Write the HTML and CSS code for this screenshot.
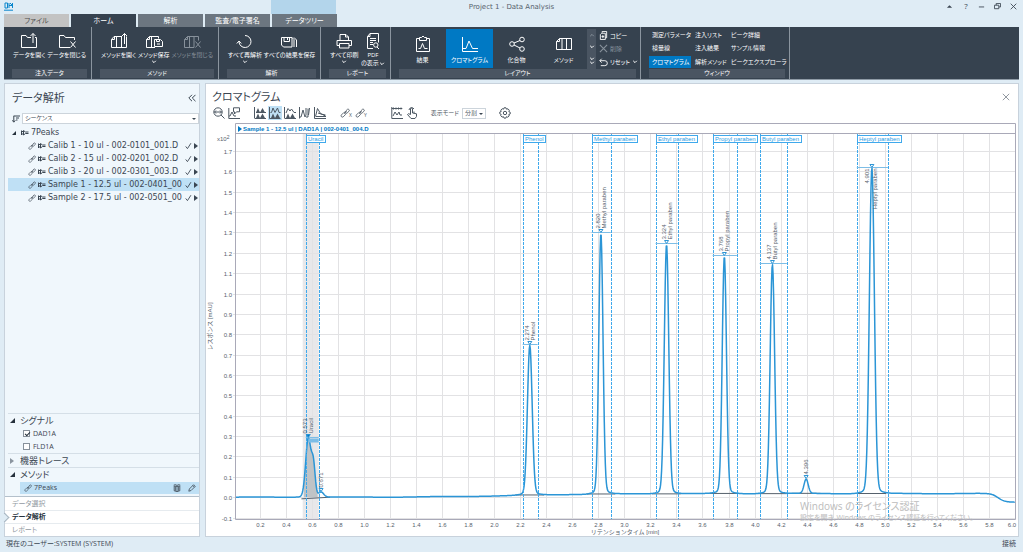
FILE: index.html
```html
<!DOCTYPE html>
<html lang="ja">
<head>
    <meta charset="UTF-8">
    <meta name="viewport" content="width=device-width, initial-scale=1.0">
    <title>Project 1 - Data Analysis</title>
    <link rel="stylesheet" href="styles.css">
</head>
<body>
    <svg class="sprite" aria-hidden="true">
        <symbol id="i-link" viewBox="0 0 12 12"><path d="M5 7l3-3M6 5L4.500 5.500 1.500 8.500a1.600 1.600 0 0 0 2.200 2.200L6.500 8 7 6.500M6 5L7 3.500 9 1.500a1.600 1.600 0 0 1 2 2.200L8.500 6 7 6.500"/></symbol>
        <symbol id="i-pin" viewBox="0 0 8 8"><path d="M.5 1.500v4.500M.5 2.500h2M.5 5h2M2.500 1.500v4.500L4.500 4.500h3M2.500 1.500L4.500 3h3"/></symbol>
        <symbol id="i-check" viewBox="0 0 8 8"><path d="M.8 4.500l2 2.500L6.800.8"/></symbol>
        <symbol id="i-play" viewBox="0 0 4 6"><path d="M0 0l4 3-4 3z"/></symbol>
        <symbol id="i-down" viewBox="0 0 6 4"><path d="M1.200.8L3 2.600 4.800.8"/></symbol>
        <symbol id="i-x" viewBox="0 0 8 8"><path d="M.8.8l6.400 6.400M7.200.8L.8 7.200"/></symbol>
        <symbol id="i-folder-open" viewBox="0 0 18 18"><path d="M11 5.500H7.500L6 3.500H1.500v12h15v-10H15M13 11V1.500M10.500 4L13 1.500 15.500 4"/></symbol>
        <symbol id="i-folder-close" viewBox="0 0 18 18"><path d="M12 15.500H1.500v-12H6l1.500 2h9V8M12.500 9.500l5 6M17.500 9.500l-5 6"/></symbol>
        <symbol id="i-method-open" viewBox="0 0 18 18"><path d="M12 4.500H4l-2.500 3v8h15v-11M4.500 4.500v3h-3M6.500 4.500v11M11.500 4.500v11M14.500 12V1.500M12 4l2.500-2.500L17 4"/></symbol>
        <symbol id="i-method-save" viewBox="0 0 18 18"><path d="M10 15.500H1.500v-8l3-3h9v2M4.500 4.500v3h-3M6.500 4.500v11M9.500 7.500h6l2 2v5h-8zM11.500 7.500v2h3v-2M12 12h3"/></symbol>
        <symbol id="i-method-close" viewBox="0 0 18 18"><path d="M11 15.500H1.500v-8l3-3h11v4M4.500 4.500v3h-3M6.500 4.500v11M11 4.500v11M12.500 9.500l5 6M17.500 9.500l-5 6"/></symbol>
        <symbol id="i-rerun" viewBox="0 0 18 18"><path d="M9 3.500a6 6 0 1 1-6 6.500M.8 11.500L3 9l2.300 2.500"/></symbol>
        <symbol id="i-save-all" viewBox="0 0 18 18"><path d="M1.500 5.500h10.500v9.500H3.500l-2-2zM4 5.500v4h5.500v-4M7.500 6v2M12 5.500l2 2V15M14 5.500l2.500 2.500v7"/></symbol>
        <symbol id="i-print" viewBox="0 0 18 18"><path d="M5 8V2.500h6L13.500 5v3M4 13.500H2V8.500h14.500v5H14M4.500 11.500h9.500v4.500H4.500zM10.500 2.500V5h3"/></symbol>
        <symbol id="i-pdf" viewBox="0 0 18 18"><path d="M9 16.500H3.500v-12l2.500-3h8.500v9M6 1.500v3H3.500M6 6.500h6M6 8.500h6M6 10.500h3M6 12.500h3M15 17l-2-2"/><circle cx="11.800" cy="13" r="2.200"/></symbol>
        <symbol id="i-result" viewBox="0 0 18 18"><path d="M5.500 3.500h-3v13h13v-13h-3M5.500 2.500h2L9 1l1.500 1.500h2v3h-7zM4.500 13.500h2l2-5 2 5h3"/></symbol>
        <symbol id="i-chrom" viewBox="0 0 18 18"><path d="M1.500 2v14.500H17M2 13.500h3L8 6l3.500 7.500H17"/></symbol>
        <symbol id="i-share" viewBox="0 0 18 18"><circle cx="4" cy="9" r="2.300"/><circle cx="14" cy="4.500" r="2.300"/><circle cx="14" cy="14" r="2.300"/><path d="M6 8l6-2.500M6 10l6 3"/></symbol>
        <symbol id="i-method" viewBox="0 0 18 18"><path d="M1.500 6.500l3-3h12v11h-15zM4.500 3.500v3h-3M7 3.500v11M11.500 3.500v11"/></symbol>
        <symbol id="i-copy" viewBox="0 0 10 10"><path d="M3.500 2V.5h5v7H7M1.500 4L3 2.500h4v7H1.500zM4.300 4.500v3.500M2.800 6.200h3"/></symbol>
        <symbol id="i-undo" viewBox="0 0 10 10"><path d="M3 .8L.8 3 3 5.200M1 3h5.500a2.500 2.500 0 0 1 0 5.500H2"/></symbol>
        <symbol id="i-zoom" viewBox="0 0 12 12"><circle cx="5" cy="5" r="4.200"/><path d="M8 8l3.500 3.500M1.500 5h7M3 3.500L1.500 5 3 6.500M7 3.500L8.500 5 7 6.500"/></symbol>
        <symbol id="i-annot" viewBox="0 0 12 12"><path d="M.8 1v10.500H12M1 9h1l2-4 2 4h2M5.500.8h6v4h-3L6.500 7V4.800h-1z"/></symbol>
        <symbol id="i-peaks" viewBox="0 0 12 12"><path d="M.5 0v11.500M2 5.500h10M1 11.500h11"/><path class="solid" d="M2 5.500L4 1l2 4.500L8.500 1l2.500 4.500zM2 11L4 6.500l2 4.500 2.500-4.500L11 11z"/></symbol>
        <symbol id="i-peaks-on" viewBox="0 0 12 12"><path d="M.5 0v11.500M1.500 5.500h1L4 1l2 4.500L8.500 1l1.500 4.500h1.500M.5 11.500h11"/><path class="solid" d="M2 11l2-4.500L6 11l2.500-4.500L11 11z"/></symbol>
        <symbol id="i-peaks-off" viewBox="0 0 12 12"><path d="M.5 0v11.500M2 6L4 1.500l2 2.500 1.500-2L10 5.500h2M1 11.500h11"/><path class="solid" d="M2 11l2-4.500L6 11l2.500-4.500L11 11z"/></symbol>
        <symbol id="i-split" viewBox="0 0 12 12"><path d="M.5 0v11.500M1 10h1l2-7 2 7 1-2V1M7 10h2V1.500M9.500 8l1-7"/></symbol>
        <symbol id="i-overlay" viewBox="0 0 12 12"><path d="M.5 0v11.500H12M1.500 9.500l2-8 3 5 5 2.500M2 9.500h10M4 6l3 1 4.500 1"/></symbol>
        <symbol id="i-scale" viewBox="0 0 12 12"><path d="M.8 0v11.500H12M.8 1.500h10.500M2.500.5v2M5 .5v2M7.500.5v2M10 .5v2M2 9l2-4 2 3 2-3 1 3h2"/></symbol>
        <symbol id="i-hand" viewBox="0 0 12 12"><path d="M4.500 7.500V2a1 1 0 0 1 2 0v4l4 .8v2.700L9 11.500H5L1.500 7.500l1-.8zM8 6V4.500M3 3a2.700 2.700 0 0 1 5-1"/></symbol>
        <symbol id="i-gear" viewBox="0 0 12 12"><circle cx="6" cy="6" r="1.700"/><path d="M5 .8h2l.5 1.400 1.500-.4 1.300 1.500-.5 1.300 1.400.6v1.800l-1.400.5.4 1.500-1.500 1.200-1.300-.5-.5 1.400H5l-.5-1.400-1.500.4L1.700 8.600l.5-1.200L.8 6.800V5l1.400-.5-.4-1.300L3.200 1.700l1.300.5z"/></symbol>
        <symbol id="i-book" viewBox="0 0 10 10"><path d="M5 2.500v7L1.500 8.500v-6L5 3l3.500-.5v6L5 9.500M.8 1.500L3 .8l2 1 2-1 2.200.7M3 3v5.500M7 3v5.500"/></symbol>
        <symbol id="i-pen" viewBox="0 0 10 10"><path d="M1 9l.7-2.800L7 .9 9 3 3.800 8.200zM6 2l2 2"/></symbol>
        <symbol id="i-sort" viewBox="0 0 8 8"><path d="M1.800.8v6M.3 5.300l1.500 1.900 1.500-1.900M1.800 1H8M4 3h3M4 5h1.500"/></symbol>
        <symbol id="i-logo" viewBox="0 0 10 10"><path d="M1 1v5h2.500V1zM5 1v5M5 3.500h3M8.500 1v5M6 1l2 2M0 8.200h9"/></symbol>
    </svg>

    <header class="titlebar">
        <svg class="logo"><use href="#i-logo"/></svg>
        <div class="context-tab"></div>
        <h1>Project 1 - Data Analysis</h1>
        <div class="window-buttons">
            <button aria-label="リボンを折りたたむ"><svg viewBox="0 0 8 8"><path class="solid" d="M1 5.500L4 2.500l3 3z"/></svg></button>
            <button aria-label="ヘルプ">?</button>
            <button aria-label="最小化"><svg viewBox="0 0 8 8"><path d="M1 4.500h6"/></svg></button>
            <button aria-label="元に戻す"><svg viewBox="0 0 8 8"><path d="M2.500 2.500v-2h5v4h-2M.5 2.500h5v4h-5z"/></svg></button>
            <button aria-label="閉じる"><svg viewBox="0 0 8 8"><use href="#i-x"/></svg></button>
        </div>
    </header>

    <nav class="tabs">
        <button class="tab file">ファイル</button>
        <button class="tab active">ホーム</button>
        <button class="tab">解析</button>
        <button class="tab">監査/電子署名</button>
        <button class="tab">データツリー</button>
    </nav>

    <div class="ribbon">
        <section class="group group-data">
            <div class="tools">
                <button class="tool"><svg><use href="#i-folder-open"/></svg>データを開く</button>
                <button class="tool"><svg><use href="#i-folder-close"/></svg>データを閉じる</button>
            </div>
            <h2>注入データ</h2>
        </section>
        <section class="group group-method">
            <div class="tools">
                <button class="tool"><svg><use href="#i-method-open"/></svg>メソッドを開く</button>
                <button class="tool"><svg><use href="#i-method-save"/></svg>メソッド保存<svg class="down"><use href="#i-down"/></svg></button>
                <button class="tool" disabled><svg><use href="#i-method-close"/></svg>メソッドを閉じる</button>
            </div>
            <h2>メソッド</h2>
        </section>
        <section class="group group-analysis">
            <div class="tools">
                <button class="tool"><svg><use href="#i-rerun"/></svg>すべて再解析<svg class="down"><use href="#i-down"/></svg></button>
                <button class="tool"><svg><use href="#i-save-all"/></svg>すべての結果を保存</button>
            </div>
            <h2>解析</h2>
        </section>
        <section class="group group-report">
            <div class="tools">
                <button class="tool"><svg><use href="#i-print"/></svg>すべて印刷<svg class="down"><use href="#i-down"/></svg></button>
                <button class="tool"><svg><use href="#i-pdf"/></svg>PDF<span>の表示<svg class="down"><use href="#i-down"/></svg></span></button>
            </div>
            <h2>レポート</h2>
        </section>
        <section class="group group-layout">
            <div class="tools">
                <button class="tool large"><svg><use href="#i-result"/></svg>結果</button>
                <button class="tool large selected"><svg><use href="#i-chrom"/></svg>クロマトグラム</button>
                <button class="tool large"><svg><use href="#i-share"/></svg>化合物</button>
                <button class="tool large"><svg><use href="#i-method"/></svg>メソッド</button>
                <div class="scroller">
                    <button aria-label="上へ" disabled><svg class="down up"><use href="#i-down"/></svg></button>
                    <button aria-label="下へ"><svg class="down"><use href="#i-down"/></svg></button>
                    <button aria-label="その他"><svg class="down"><use href="#i-down"/></svg><svg class="down"><use href="#i-down"/></svg></button>
                </div>
                <div class="small-list">
                    <button><svg><use href="#i-copy"/></svg>コピー</button>
                    <button disabled><svg><use href="#i-x"/></svg>削除</button>
                    <button><svg><use href="#i-undo"/></svg>リセット<svg class="down"><use href="#i-down"/></svg></button>
                </div>
            </div>
            <h2>レイアウト</h2>
        </section>
        <section class="group group-window">
            <div class="window-list">
                <button>測定パラメータ</button>
                <button>注入リスト</button>
                <button>ピーク詳細</button>
                <button>検量線</button>
                <button>注入結果</button>
                <button>サンプル情報</button>
                <button class="selected">クロマトグラム</button>
                <button>解析メソッド</button>
                <button>ピークエクスプローラ</button>
            </div>
            <h2>ウィンドウ</h2>
        </section>
    </div>

    <main class="workspace">
        <aside class="sidebar">
            <div class="panel-head">
                <h2>データ解析</h2>
                <button class="collapse" aria-label="折りたたむ"><svg viewBox="0 0 8 8"><path d="M4 .8L.8 4 4 7.200M7.500.8L4.300 4l3.200 3.200"/></svg></button>
            </div>
            <div class="sort">
                <svg><use href="#i-sort"/></svg>
                <span class="select">
                    <select aria-label="並べ替え"><option>シーケンス</option></select>
                </span>
            </div>
            <ul class="tree">
                <li class="root"><i class="expanded"></i><svg><use href="#i-pin"/></svg><span>7Peaks</span></li>
                <li><svg><use href="#i-link"/></svg><svg><use href="#i-pin"/></svg><span>Calib 1 - 10 ul - 002-0101_001.D</span><svg class="check"><use href="#i-check"/></svg><svg class="play"><use href="#i-play"/></svg></li>
                <li><svg><use href="#i-link"/></svg><svg><use href="#i-pin"/></svg><span>Calib 2 - 15 ul - 002-0201_002.D</span><svg class="check"><use href="#i-check"/></svg><svg class="play"><use href="#i-play"/></svg></li>
                <li><svg><use href="#i-link"/></svg><svg><use href="#i-pin"/></svg><span>Calib 3 - 20 ul - 002-0301_003.D</span><svg class="check"><use href="#i-check"/></svg><svg class="play"><use href="#i-play"/></svg></li>
                <li class="selected"><svg><use href="#i-link"/></svg><svg><use href="#i-pin"/></svg><span>Sample 1 - 12.5 ul - 002-0401_00</span><svg class="check"><use href="#i-check"/></svg><svg class="play"><use href="#i-play"/></svg></li>
                <li><svg><use href="#i-link"/></svg><svg><use href="#i-pin"/></svg><span>Sample 2 - 17.5 ul - 002-0501_00</span><svg class="check"><use href="#i-check"/></svg><svg class="play"><use href="#i-play"/></svg></li>
            </ul>
            <section class="fold">
                <h3><i class="expanded"></i>シグナル</h3>
                <label><input type="checkbox" checked>DAD1A</label>
                <label><input type="checkbox">FLD1A</label>
            </section>
            <section class="fold">
                <h3><i class="closed"></i>機器トレース</h3>
            </section>
            <section class="fold">
                <h3><i class="expanded"></i>メソッド</h3>
                <div class="method-row">
                    <svg><use href="#i-link"/></svg><span>7Peaks</span>
                    <button aria-label="メソッドを表示"><svg><use href="#i-book"/></svg></button>
                    <button aria-label="編集"><svg><use href="#i-pen"/></svg></button>
                </div>
            </section>
            <nav class="views">
                <a href="#select">データ選択</a>
                <a href="#analysis" class="active">データ解析</a>
                <a href="#report">レポート</a>
            </nav>
        </aside>

        <section class="chart-panel">
            <div class="panel-head">
                <h2>クロマトグラム</h2>
                <button class="close" aria-label="閉じる"><svg><use href="#i-x"/></svg></button>
            </div>
            <div class="toolbar">
                <div class="set">
                    <button aria-label="ズーム"><svg><use href="#i-zoom"/></svg></button>
                    <button aria-label="注釈"><svg><use href="#i-annot"/></svg></button>
                </div>
                <div class="set">
                    <button aria-label="ピーク表示"><svg><use href="#i-peaks"/></svg></button>
                    <button aria-label="ピーク塗りつぶし" class="on"><svg><use href="#i-peaks-on"/></svg></button>
                    <button aria-label="ピーク枠"><svg><use href="#i-peaks-off"/></svg></button>
                    <button aria-label="並べて表示"><svg><use href="#i-split"/></svg></button>
                    <button aria-label="重ね書き"><svg><use href="#i-overlay"/></svg></button>
                </div>
                <div class="set links">
                    <button aria-label="X軸リンク"><svg><use href="#i-link"/></svg><sub>X</sub></button>
                    <button aria-label="Y軸リンク"><svg><use href="#i-link"/></svg><sub>Y</sub></button>
                </div>
                <div class="set">
                    <button aria-label="スケール"><svg><use href="#i-scale"/></svg></button>
                    <button aria-label="手動積分"><svg><use href="#i-hand"/></svg></button>
                </div>
                <div class="set mode">
                    <label for="mode">表示モード</label>
                    <span class="select"><select id="mode"><option>分割</option></select></span>
                </div>
                <div class="set">
                    <button aria-label="設定"><svg><use href="#i-gear"/></svg></button>
                </div>
            </div>
            <div class="chart" id="chart"></div>
            <div class="watermark">
                <p>Windows のライセンス認証</p>
                <p class="small">設定を開き、Windows のライセンス認証を行ってください。</p>
            </div>
        </section>
    </main>

    <footer class="statusbar">
        <span>現在のユーザー:SYSTEM (SYSTEM)</span>
        <span>接続</span>
    </footer>

    <script src="chart.js"></script>
</body>
</html>
```
FILE: styles.css
```css
:root {
    --bg: #dfecf5;
    --ribbon: #36424f;
    --strip: #4a5562;
    --accent: #0079c4;
    --line: #c8d2dc;
    --select: #bfe0f5;
    --text: #3b4652;
}
* {
    box-sizing: border-box;
}
body {
    margin: 0;
    min-height: 100vh;
    display: flex;
    flex-direction: column;
    background-color: var(--bg);
    color: var(--text);
    font-family: "Open Sans", "Noto Sans CJK JP", sans-serif;
    font-size: 7px;
    line-height: 10px;
    font-feature-settings: "palt";
}
h1, h2, h3, p, ul {
    margin: 0;
    padding: 0;
    font-weight: normal;
}
ul {
    list-style: none;
}
button {
    border: 0;
    padding: 0;
    margin: 0;
    background: none;
    color: inherit;
    font: inherit;
    font-feature-settings: inherit;
    white-space: nowrap;
}
svg {
    fill: none;
    stroke: currentColor;
    stroke-width: 1;
    display: block;
    flex: none;
}
.solid {
    fill: currentColor;
    stroke: none;
}
.sprite {
    position: absolute;
    width: 0;
    height: 0;
}

/* title bar */
.titlebar {
    position: relative;
    height: 14px;
    padding: 0 4px;
    display: flex;
    align-items: center;
    justify-content: space-between;
}
.titlebar h1 {
    font: 7px/16px "DejaVu Sans", sans-serif;
    color: #56616c;
}
.logo {
    width: 10px;
    height: 10px;
    color: #0a86cc;
}
.context-tab {
    position: absolute;
    left: 271px;
    top: 0;
    width: 65px;
    height: 14px;
    background-color: #b3d5eb;
}
.window-buttons {
    display: flex;
    gap: 8px;
    position: absolute;
    right: 5px;
    top: 1px;
}
.window-buttons button {
    width: 8px;
    font-size: 8px;
}
.window-buttons svg {
    width: 7px;
    height: 7px;
}
.titlebar::after {
    content: "";
    width: 10px;
}

/* tabs */
.tabs {
    display: flex;
    gap: 2px;
    padding: 0 4px;
}
.tab {
    width: 65px;
    height: 13px;
    background-color: #6c7680;
    color: #fff;
}
.tab.active {
    background-color: var(--ribbon);
}
.tab.file {
    background-color: #c3c3c3;
    color: #4c4c4c;
}

/* ribbon */
.ribbon {
    display: flex;
    margin: 0 4px;
    background-color: var(--ribbon);
    border-bottom: 1px solid #8f9ba6;
    color: #fff;
    font-size: 6px;
    line-height: 8px;
}
.group {
    display: flex;
    flex-direction: column;
    padding: 2px 4px 1px 8px;
    border-right: 1px solid #8b959f;
}
.group h2 {
    height: 9px;
    font-size: 6px;
    line-height: 9px;
    text-align: center;
    background-color: var(--strip);
}
.tools {
    display: flex;
    height: 40px;
}
.tool {
    display: flex;
    flex-direction: column;
    align-items: center;
    flex: auto;
    padding-top: 3px;
    height: 39px;
}
.tool svg {
    width: 18px;
    height: 18px;
    margin-bottom: 1px;
}
.tool span {
    display: flex;
    align-items: center;
}
.down,
.tool .down {
    width: 6px;
    height: 4px;
    margin: 0;
}
.down.up {
    transform: rotate(180deg);
}
.tool .down {
    margin-top: 1px;
}
.tool:disabled,
.small-list button:disabled,
.scroller button:disabled {
    color: #87919b;
}
.tool.large {
    flex: none;
    width: 47px;
    padding-top: 6px;
}
.tool.large svg {
    margin-bottom: 3px;
}
.selected {
    background-color: var(--accent);
}
.group-data { width: 88px; }
.group-method { width: 127px; }
.group-analysis { width: 102px; }
.group-report { width: 70px; }
.group-layout { width: 250px; }
.group-window { width: 149px; }
.scroller {
    flex: none;
    width: 9px;
    background-color: var(--strip);
    display: flex;
    flex-direction: column;
    justify-content: space-around;
    align-items: center;
}
.small-list {
    display: flex;
    flex-direction: column;
    justify-content: space-around;
    padding-left: 3px;
}
.small-list button {
    display: flex;
    align-items: center;
    gap: 2px;
}
.small-list svg {
    width: 9px;
    height: 9px;
}
.small-list .down {
    width: 6px;
    height: 4px;
}
.window-list {
    display: grid;
    grid-template-columns: 42px 35px 1fr;
    gap: 1px;
    height: 40px;
    padding-bottom: 1px;
}
.window-list button {
    text-align: left;
    padding-left: 3px;
}

/* workspace */
.workspace {
    flex: 1;
    display: flex;
    gap: 5px;
    padding: 3px 4px 0;
}
.sidebar {
    width: 196px;
    flex: none;
    display: flex;
    flex-direction: column;
    border: 1px solid var(--line);
    background-color: #f0f7fc;
}
.panel-head {
    display: flex;
    justify-content: space-between;
    align-items: center;
}
.panel-head h2 {
    font-size: 11px;
    line-height: 18px;
}
.sidebar .panel-head {
    padding: 5px 3px 6px 7px;
}
.collapse svg,
.close svg {
    width: 8px;
    height: 8px;
}
.close {
    color: #9299a1;
}
.sort {
    display: flex;
    align-items: center;
    gap: 2px;
    padding-left: 7px;
    margin-bottom: 2px;
}
.sort svg {
    width: 8px;
    height: 8px;
}
.select {
    position: relative;
    display: block;
    background-color: #fff;
    border: 1px solid #ccd4db;
}
.sort .select {
    flex: 1;
}
.select select {
    appearance: none;
    display: block;
    width: 100%;
    height: 9px;
    padding: 0 2px;
    border: 0;
    background: none;
    color: inherit;
    font: inherit;
    font-size: 6px;
    line-height: 9px;
    font-feature-settings: inherit;
}
.select::after {
    content: "";
    position: absolute;
    right: 2px;
    top: 4px;
    border: 2px solid transparent;
    border-top-color: var(--text);
    border-bottom: 0;
}
.tree {
    flex: 1;
    font: 8px/13px "DejaVu Sans", sans-serif;
    padding-left: 3px;
}
.tree li {
    display: flex;
    align-items: center;
    height: 13px;
    padding: 0 1px 0 20px;
}
.tree li.root {
    padding-left: 4px;
}
.tree li.selected {
    background-color: var(--select);
}
.tree svg {
    width: 8px;
    height: 8px;
    margin-right: 2px;
}
.tree span {
    flex: 1;
    white-space: nowrap;
}
.tree .check {
    width: 7px;
    margin: 0 2px 0 0;
}
.tree .play {
    width: 4px;
    height: 6px;
    margin: 0;
    fill: currentColor;
    stroke: none;
}
.expanded,
.closed {
    width: 0;
    height: 0;
    flex: none;
    border: solid transparent;
}
.expanded {
    border-width: 0 0 5px 5px;
    border-bottom-color: #26313c;
    margin-right: 5px;
}
.closed {
    border-width: 3px 0 3px 4px;
    border-left-color: #8b959f;
    margin-right: 6px;
}
.root .expanded {
    border-width: 0 0 4px 4px;
}
.fold {
    margin-left: 3px;
    border-top: 1px solid #d5dfe7;
}
.fold h3 {
    display: flex;
    align-items: center;
    font-size: 9px;
    line-height: 13px;
    padding-left: 2px;
}
.fold label {
    display: flex;
    align-items: center;
    gap: 3px;
    height: 13px;
    padding-left: 15px;
}
.fold input {
    appearance: none;
    margin: 0;
    width: 7px;
    height: 7px;
    border: 1px solid #87919b;
    background-color: #fff;
}
.fold input:checked::before {
    content: "";
    display: block;
    width: 4px;
    height: 2px;
    margin: 1px;
    border-left: 1px solid #26313c;
    border-bottom: 1px solid #26313c;
    transform: rotate(-45deg);
}
.method-row {
    display: flex;
    align-items: center;
    margin: 1px 0 2px 12px;
    height: 12px;
    padding: 0 3px 0 4px;
    gap: 2px;
    background-color: var(--select);
}
.method-row span {
    flex: 1;
}
.method-row svg {
    width: 8px;
    height: 8px;
}
.method-row button {
    margin-left: 5px;
}
.views {
    background-color: #fff;
    border-top: 1px solid #b4c0cb;
}
.views a {
    display: block;
    position: relative;
    padding-left: 7px;
    line-height: 13px;
    color: #929aa2;
    text-decoration: none;
}
.views a + a {
    border-top: 1px solid #e6ebef;
    line-height: 12px;
}
.views a.active {
    color: #26313c;
    font-weight: 600;
}
.views a.active::before {
    content: "";
    position: absolute;
    left: -4px;
    top: 3px;
    width: 6px;
    height: 6px;
    background-color: var(--bg);
    border: solid #a9b6c1;
    border-width: 1px 1px 0 0;
    transform: rotate(45deg);
}

/* chromatogram */
.chart-panel {
    position: relative;
    flex: 1;
    min-width: 0;
    display: flex;
    flex-direction: column;
    border: 1px solid var(--line);
    background-color: #fff;
}
.chart-panel .panel-head {
    padding: 4px 8px 0 6px;
}
.toolbar {
    display: flex;
    align-items: center;
    gap: 12px;
    height: 14px;
    margin-bottom: 3px;
    padding-left: 6px;
    font-size: 6px;
    color: #4d5863;
}
.set {
    display: flex;
    align-items: center;
    gap: 1px;
}
.set.links {
    padding-right: 10px;
}
.set button {
    display: flex;
    align-items: flex-end;
    padding: 1px;
}
.set button.on {
    background-color: var(--select);
}
.set svg {
    width: 12px;
    height: 12px;
}
.set.links svg {
    width: 10px;
    height: 10px;
}
.set sub {
    font-size: 5px;
    line-height: 5px;
    margin-left: -1px;
}
.set.mode {
    gap: 3px;
}
.mode .select {
    width: 24px;
}
.chart {
    flex: 1;
    min-height: 200px;
    position: relative;
}
.chart svg {
    position: absolute;
    inset: 0;
    width: 100%;
    height: 100%;
    font: 6px "Liberation Sans", "Noto Sans CJK JP", sans-serif;
}
.chart text {
    fill: #56616c;
    stroke: none;
}
.chart .frame {
    stroke: #a9a9b8;
}
.chart .grid {
    stroke: #e2e2e4;
}
.chart .shade {
    fill: #e8e8ea;
    stroke: none;
}
.chart .area {
    fill: #bfc3c6;
    stroke: none;
}
.chart .trace {
    stroke: #2b95d6;
    stroke-width: 1.5;
    stroke-linejoin: round;
}
.chart .base {
    stroke: #56616c;
}
.chart .window {
    stroke: #3fa9ec;
    stroke-dasharray: 3 1;
}
.chart .bar {
    stroke: #7dbde6;
}
.chart .mark {
    stroke: #2b95d6;
    fill: #fff;
}
.chart .mark.filled {
    fill: #0079c4;
}
.chart .tag {
    fill: #fff;
    stroke: #3fa9ec;
}
.chart .tag-text {
    fill: #2b9de4;
}
.chart .title {
    fill: #0079c4;
    font-weight: bold;
}
.chart .title-arrow {
    fill: #0079c4;
    stroke: none;
}
.watermark {
    position: absolute;
    right: 38px;
    bottom: 13px;
    width: 180px;
    color: #bcbcbc;
    white-space: nowrap;
    font-size: 10px;
    line-height: 13px;
}
.watermark .small {
    font-size: 7px;
    line-height: 10px;
}

/* status bar */
.statusbar {
    display: flex;
    justify-content: space-between;
    padding: 1px 7px 2px 6px;
    line-height: 12px;
}
```
FILE: chart.js
```js
const chart = document.getElementById('chart');

const X_MIN = 0.01, X_MAX = 6.0;
const Y_MIN = -0.107, Y_MAX = 1.783;

// rt: retention time, h: apex, s: sigma, from/to: expected window
const peaks = [
    { rt: 0.573, h: 0.290, s: 0.020, name: 'Uracil', from: 0.553, to: 0.653, selected: true },
    { rt: 0.671, h: 0.025, s: 0.020, noBar: true },
    { rt: 2.274, h: 0.735, s: 0.018, name: 'Phenol', from: 2.219, to: 2.334 },
    { rt: 2.820, h: 1.280, s: 0.016, name: 'Methyl paraben', from: 2.749, to: 2.895 },
    { rt: 3.324, h: 1.225, s: 0.017, name: 'Ethyl paraben', from: 3.240, to: 3.410 },
    { rt: 3.768, h: 1.165, s: 0.016, name: 'Propyl paraben', from: 3.678, to: 3.864 },
    { rt: 4.137, h: 1.125, s: 0.017, name: 'Butyl paraben', from: 4.039, to: 4.248 },
    { rt: 4.396, h: 0.070, s: 0.016, noBar: true },
    { rt: 4.901, h: 1.600, s: 0.019, name: 'Heptyl paraben', from: 4.785, to: 5.024, inside: true }
];

const baseline = (t) => {
    const rise = 0.018 / (1 + Math.exp(-(t - 2.2) * 3));
    const drop = 0.042 / (1 + Math.exp(-(t - 5.87) * 40));
    return rise - drop + 0.001 * Math.sin(t * 9);
};

const signal = (t) => {
    let y = baseline(t);
    peaks.forEach((p) => {
        const d = (t - p.rt) / p.s;
        y += p.h * 0.985 * Math.exp(-d * d / 2) + p.h * 0.015 * Math.exp(-d * d / 18);
    });
    // shoulder on the back of uracil
    y += 0.15 * Math.exp(-Math.pow((t - 0.612) / 0.014, 2) / 2);
    return y;
};

function draw() {
    const w = chart.clientWidth, h = chart.clientHeight;
    const left = 29, right = w - 3, top = 11, bottom = h - 17;
    const X = (t) => left + (t - X_MIN) / (X_MAX - X_MIN) * (right - left);
    const Y = (v) => bottom - (v - Y_MIN) / (Y_MAX - Y_MIN) * (bottom - top);
    const snap = (n) => Math.round(n) + 0.5;
    const out = [];
    const line = (cls, x1, y1, x2, y2) => out.push(`<path class="${cls}" d="M${x1} ${y1}L${x2} ${y2}"/>`);
    const text = (x, y, s, cls = '', anchor = 'start') =>
        out.push(`<text class="${cls}" x="${x}" y="${y}" text-anchor="${anchor}">${s}</text>`);
    const vtext = (x, y, s, anchor = 'start') =>
        out.push(`<text text-anchor="${anchor}" transform="translate(${x} ${y}) rotate(-90)">${s}</text>`);

    const u = peaks[0];
    out.push(`<rect class="shade" x="${X(u.from) - 3}" y="${top}" width="${X(u.to) - X(u.from) + 3}" height="${bottom - top}"/>`);

    for (let i = 1; i <= 30; i++) {
        const x = snap(X(i * 0.2));
        if (i < 30) line('grid', x, top, x, bottom);
        text(Math.min(x, w - 6), bottom + 8, (i * 0.2).toFixed(1), '', 'middle');
    }
    for (let i = -1; i <= 17; i++) {
        const y = snap(Y(i * 0.1));
        line('grid', left - 2, y, right, y);
        text(left - 3, y + 2, (i * 0.1).toFixed(1), '', 'end');
    }

    // selected peak area
    let area = '';
    for (let t = 0.54; t <= 0.645; t += 0.003) area += `L${X(t)} ${Y(signal(t))}`;
    out.push(`<path class="area" d="M${X(0.54)} ${Y(0)}${area}L${X(0.645)} ${Y(0)}z"/>`);
    line('base', X(0.52), Y(-0.008), X(0.74), Y(0));
    peaks.slice(2).forEach((p) => line('base', X(p.rt - 0.11), Y(baseline(p.rt)), X(p.rt + 0.11), Y(baseline(p.rt))));

    let d = '';
    for (let t = X_MIN; t <= X_MAX; t += 0.004) d += `${d ? 'L' : 'M'}${X(t).toFixed(2)} ${Y(signal(t)).toFixed(2)}`;
    out.push(`<path class="trace" d="${d}"/>`);

    peaks.forEach((p) => {
        const x = X(p.rt);
        const y = snap(Y(signal(p.rt)) - 1);
        if (p.name) {
            line('window', snap(X(p.from)), top, snap(X(p.from)), bottom);
            line('window', snap(X(p.to)), top, snap(X(p.to)), bottom);
        }
        if (!p.noBar) line('bar', X(p.from), y, X(p.to), y);
        if (p.selected) out.push(`<path class="bar" stroke-width="4" d="M${x} ${y + 3}H${X(p.to)}"/>`);
        out.push(`<path class="mark${p.selected ? ' filled' : ''}" d="M${x - 2} ${y - 3}h4l-2 3z"/>`);
        const ty = y - 4;
        if (p.inside) {
            vtext(x - 3, y + 1, p.rt.toFixed(3), 'end');
            vtext(x + 5, y + 1, p.name, 'end');
        } else {
            vtext(p.name ? x - 1 : x + 2, ty, p.rt.toFixed(3));
            if (p.name) vtext(x + 5, ty, p.name);
        }
    });

    // frame and title strip
    out.push(`<path class="frame" d="M${left + 0.5} .5H${right + 0.5}V${bottom + 0.5}H${left + 0.5}zM${left} ${top - 0.5}H${right}"/>`);
    out.push(`<path class="title-arrow" d="M${left + 3} 3l4 3-4 3z"/>`);
    text(left + 8, 8, 'Sample 1 - 12.5 ul | DAD1A | 002-0401_004.D', 'title');
    out.push(`<text x="${left - 18}" y="${top + 7}">x10<tspan dy="-2" font-size="5">2</tspan></text>`);
    text((left + right) / 2, h - 2, 'リテンションタイム [min]', '', 'middle');
    vtext(6, (top + bottom) / 2, 'レスポンス [mAU]', 'middle');

    peaks.filter((p) => p.name).forEach((p) => out.push(
        `<rect class="tag" x="${snap(X(p.from))}" y="${top + 1.5}" width="10" height="7"/>
        <text class="tag-text" x="${snap(X(p.from)) + 1.5}" y="${top + 7}">${p.name}</text>`));

    chart.innerHTML = `<svg>${out.join('')}</svg>`;

    // fit each tag box to its text
    chart.querySelectorAll('.tag').forEach((box) => {
        const label = box.nextElementSibling;
        box.setAttribute('width', Math.ceil(label.getComputedTextLength()) + 3);
    });
}

draw();
window.addEventListener('resize', draw);
```
